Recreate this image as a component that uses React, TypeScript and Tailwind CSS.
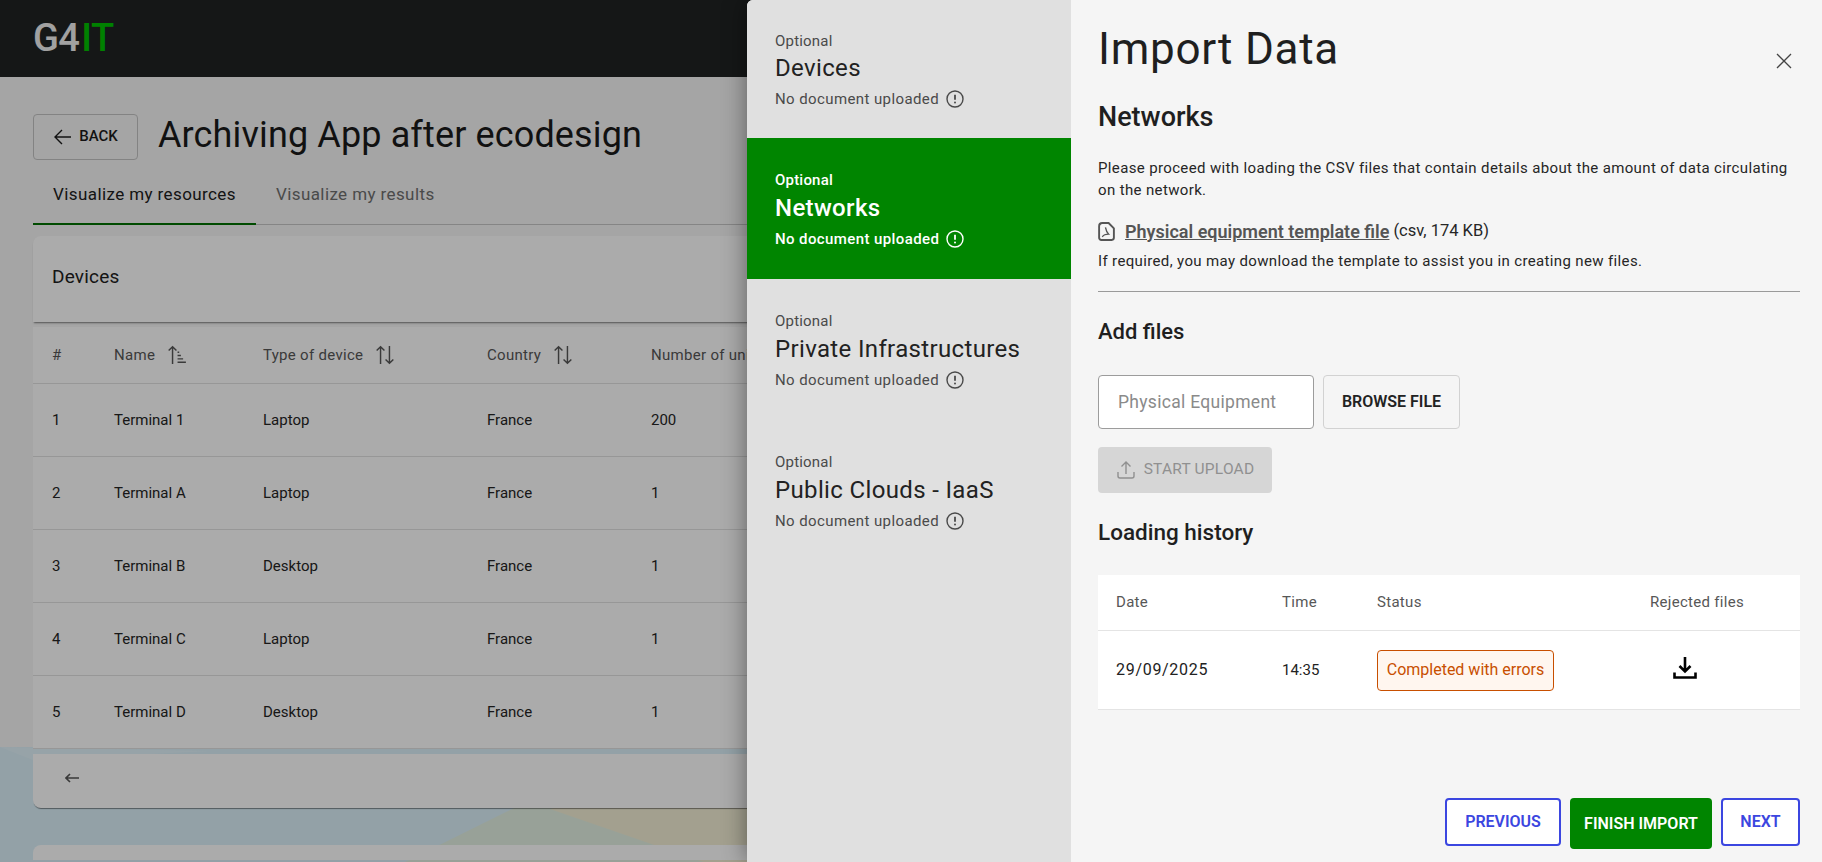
import React from "react";

const font = "font-['Roboto',sans-serif]";

function SortAlt() {
  return (
    <svg width="20" height="20" viewBox="0 0 18 18" fill="none" stroke="currentColor" strokeWidth="1.3" className="ml-3 shrink-0">
      <path d="M5 17V1.500M1.500 5 5 1.500 8.500 5" />
      <path d="M13 1v15.500M9.500 13l3.500 3.500 3.500-3.500" />
    </svg>
  );
}

function SortUp() {
  return (
    <svg width="20" height="20" viewBox="0 0 18 18" fill="none" stroke="currentColor" strokeWidth="1.3" className="ml-3 shrink-0">
      <path d="M5 17V1.500M1.500 5 5 1.500 8.500 5" />
      <path d="M9.500 6.500h1.500M9.500 9.500h3M9.500 12.500h5M9.500 15.500h7.500" />
    </svg>
  );
}

function Alert() {
  return (
    <svg width="18" height="18" viewBox="0 0 18 18" fill="none" stroke="currentColor" strokeWidth="1.4" className="ml-[7px] shrink-0">
      <circle cx="9" cy="9" r="8" />
      <path d="M9 4.800v5" strokeWidth="1.800" />
      <circle cx="9" cy="12.600" r="1" fill="currentColor" stroke="none" />
    </svg>
  );
}

const rows = [
  ["1", "Terminal 1", "Laptop", "France", "200"],
  ["2", "Terminal A", "Laptop", "France", "1"],
  ["3", "Terminal B", "Desktop", "France", "1"],
  ["4", "Terminal C", "Laptop", "France", "1"],
  ["5", "Terminal D", "Desktop", "France", "1"],
];

const steps = ["Devices", "Networks", "Private Infrastructures", "Public Clouds - IaaS"];

function Page() {
  return (
    <div className="relative w-[1822px] h-[862px] overflow-hidden bg-[#f6f6f6]">
      <svg className="absolute left-0 top-[747px]" width="1822" height="115" viewBox="0 747 1822 115">
        <rect x="0" y="747" width="1822" height="115" fill="#dbf1fa" />
        <polygon points="0,747 210,751 33,760" fill="#e2f3fb" />
        <polygon points="405,862 530,800 770,862" fill="#e3f1e3" />
        <polygon points="550,809 760,750 1000,750 1000,862 770,885" fill="#f3efd6" />
      </svg>
      <div className="relative">
        <header className="h-[77px] bg-[#202323] flex items-center pl-[33px]">
          <span className="text-[38px] font-medium tracking-[-0.6px] leading-none text-[#f0f0f0] mb-[1px]">
            G4<span className="text-[#00c000] ml-[2px]">IT</span>
          </span>
        </header>
        <div className="px-[33px]">
          <div className="flex items-center pt-9">
            <button className="w-[105px] h-[46px] border border-[#c4c4c4] rounded flex items-center justify-center gap-[6px] text-[15px] font-medium text-[#1c1c1c]">
              <svg width="20" height="20" viewBox="0 0 20 20" fill="none" stroke="currentColor" strokeWidth="1.4"><path d="M18 10H2M9 3l-7 7 7 7" /></svg>
              BACK
            </button>
            <h1 className="ml-5 mb-[3px] text-[36px] leading-[44px] text-[#1a1a1a] tracking-[0.13px]">Archiving App after ecodesign</h1>
          </div>
          <div className="flex mt-[19px] h-[46px] border-b border-[#c6c6c6] text-[17px] tracking-[0.4px]">
            <div className="w-[223px] h-[46px] border-b-[2px] border-[#007000] text-center leading-[26px] pt-[2px] text-[#202020]">Visualize my resources</div>
            <div className="ml-5 leading-[26px] pt-[2px] text-[#6f6f6f]">Visualize my results</div>
          </div>
          <div className="mt-[11px] w-full">
            <div className="h-[86px] bg-white rounded-t-lg shadow-[0_2px_2px_-1px_rgba(0,0,0,0.5)] flex items-center pl-[19px] pb-1 text-[19px] tracking-[0.2px] text-[#202020] relative">Devices</div>
            <div className="mt-[5px] bg-white text-[15px] text-[#252525]">
              <div className="h-[57px] grid grid-cols-[62px_149px_224px_164px_1fr] pl-[19px] items-center border-b border-[#e2e2e2] text-[#575757] tracking-[0.3px]">
                <div>#</div>
                <div className="flex items-center">Name<SortUp /></div>
                <div className="flex items-center">Type of device<SortAlt /></div>
                <div className="flex items-center">Country<SortAlt /></div>
                <div>Number of units</div>
              </div>
              {rows.map((r) => (
                <div key={r[0]} className="h-[73px] grid grid-cols-[62px_149px_224px_164px_1fr] pl-[19px] items-center border-b border-[#e2e2e2]">
                  {r.map((c, i) => <div key={i}>{c}</div>)}
                </div>
              ))}
            </div>
            <div className="mt-[5px] h-[54px] bg-white rounded-b-lg shadow-[0_2px_1px_-1px_rgba(0,0,0,0.45)] flex items-center pl-[32px] pb-[6px]">
              <svg width="14" height="10" viewBox="0 0 14 10" fill="none" stroke="#555" strokeWidth="1.600"><path d="M14 5H1M5 1 1 5l4 4" /></svg>
            </div>
            <div className="mt-[37px] h-[15px] bg-white rounded-t-lg" />
          </div>
        </div>
      </div>
      <div className="absolute inset-0 bg-black/[0.33]" />
    </div>
  );
}

function Drawer() {
  return (
    <div className="absolute right-0 top-0 h-[862px] w-[1075px] flex rounded-l-md shadow-[0_0_24px_rgba(0,0,0,0.45)] bg-[#f5f5f5]">
      <nav className="w-[324px] h-full bg-[#e0e0e0] rounded-tl-md shrink-0">
        {steps.map((s, idx) => {
          const active = s === "Networks";
          return (
            <div key={s} className={`${idx === 0 ? "h-[138px] pt-[31px]" : "h-[141px] pt-[32px]"} w-[324px] pl-[28px] ${active ? "bg-[#008500] text-white font-medium" : "text-[#4a4a4a]"}`}>
              <div className="text-[15px] leading-[20px] tracking-[0.2px]">Optional</div>
              <div className={`text-[24px] leading-[32px] tracking-[0.35px] ${idx === 0 ? "mt-[1px]" : "mt-[2px]"} ${active ? "" : "text-[#222]"}`}>{s}</div>
              <div className="flex items-center text-[15px] leading-[20px] mt-[5px] tracking-[0.4px]">
                No document uploaded<Alert />
              </div>
            </div>
          );
        })}
      </nav>
      <main className="flex-1 pl-[27px] pr-[22px] relative text-[#262626]">
        <h2 className="text-[44px] leading-[52px] pt-[23px] box-content tracking-[0.75px] text-[#1f1f1f]">Import Data</h2>
        <button className="absolute right-[30px] top-[53px] text-[#444]">
          <svg width="16" height="16" viewBox="0 0 16 16" fill="none" stroke="currentColor" strokeWidth="1.3"><path d="M1 1l14 14M15 1 1 15" /></svg>
        </button>
        <h3 className="text-[27px] font-medium leading-[32px] mt-[26px] text-[#1f1f1f]">Networks</h3>
        <p className="text-[15px] leading-[22px] mt-[24px] tracking-[0.36px]">Please proceed with loading the CSV files that contain details about the amount of data circulating on the network.</p>
        <div className="flex items-center mt-[18px] h-[24px]">
          <svg width="17" height="19" viewBox="0 0 16 18" fill="none" stroke="#555" strokeWidth="1.800" className="mr-[10px] shrink-0">
            <path d="M4 1h6l5 5v9a2 2 0 0 1-2 2H3a2 2 0 0 1-2-2V4a3 3 0 0 1 3-3z" />
            <path d="M7 5c.6 3 1.600 5 3 6.500-2.500 0-5 1-6 2.500" strokeWidth="1.300" />
          </svg>
          <a className="text-[18px] font-semibold underline text-[#555]">Physical equipment template file</a>
          <span className="ml-[4px] text-[16.5px]">(csv, 174 KB)</span>
        </div>
        <p className="text-[15px] leading-[22px] mt-[7px] tracking-[0.36px]">If required, you may download the template to assist you in creating new files.</p>
        <div className="border-t border-[#9a9a9a] mt-[19px]" />
        <h3 className="text-[22px] font-medium leading-[30px] mt-[25px] text-[#1f1f1f]">Add files</h3>
        <div className="flex mt-[28px] gap-[9px]">
          <div className="w-[216px] h-[54px] bg-white border border-[#9c9c9c] rounded flex items-center pl-[19px] text-[#8a8a8a] text-[17.5px] tracking-[0.3px]">Physical Equipment</div>
          <button className="w-[137px] h-[54px] border border-[#d2d2d2] rounded text-[16px] font-semibold text-[#222]">BROWSE FILE</button>
        </div>
        <button className="mt-[18px] w-[174px] h-[46px] bg-[#d6d6d6] rounded flex items-center justify-center gap-[8px] text-[15.5px] text-[#909090] tracking-[0.2px]">
          <svg width="20" height="20" viewBox="0 0 20 20" fill="none" stroke="currentColor" strokeWidth="1.4"><path d="M10 14V2M5.500 6.500 10 2l4.500 4.500M2 12v4a2 2 0 0 0 2 2h12a2 2 0 0 0 2-2v-4" /></svg>
          START UPLOAD
        </button>
        <h3 className="text-[22.5px] font-medium leading-[30px] mt-[24px] text-[#1f1f1f]">Loading history</h3>
        <div className="mt-[28px] bg-white w-[702px] text-[15px]">
          <div className="h-[56px] grid grid-cols-[166px_95px_273px_1fr] pl-[18px] items-center border-b border-[#e4e4e4] text-[#575757] tracking-[0.3px]">
            <div>Date</div><div>Time</div><div>Status</div><div>Rejected files</div>
          </div>
          <div className="h-[79px] grid grid-cols-[166px_95px_273px_1fr] pl-[18px] items-center border-b border-[#e4e4e4] text-[#222]">
            <div className="text-[16px] tracking-[0.7px]">29/09/2025</div>
            <div>14:35</div>
            <div>
              <span className="inline-flex w-[177px] h-[41px] items-center justify-center bg-[#fff6ef] border border-[#c84f00] rounded text-[#c84f00] text-[16px]">Completed with errors</span>
            </div>
            <div>
              <svg width="24" height="24" viewBox="0 0 24 24" fill="none" stroke="#000" strokeWidth="2.600" className="ml-[23px] mb-[4px]">
                <path d="M12 1v14M6.500 10l5.500 5.500 5.500-5.500M1.500 16.500v5h21v-5" />
              </svg>
            </div>
          </div>
        </div>
        <div className="absolute right-[22px] top-[798px] flex items-start gap-[9px] text-[16px] font-semibold">
          <button className="w-[116px] h-[48px] bg-white border-[2px] border-[#3b46e0] rounded text-[#3b46e0]">PREVIOUS</button>
          <button className="w-[142px] h-[51px] bg-[#008500] rounded text-white">FINISH IMPORT</button>
          <button className="w-[79px] h-[48px] bg-white border-[2px] border-[#3b46e0] rounded text-[#3b46e0]">NEXT</button>
        </div>
      </main>
    </div>
  );
}

export default function App() {
  return (
    <div className={`relative w-[1822px] h-[862px] overflow-hidden ${font}`}>
      <Page />
      <Drawer />
    </div>
  );
}
